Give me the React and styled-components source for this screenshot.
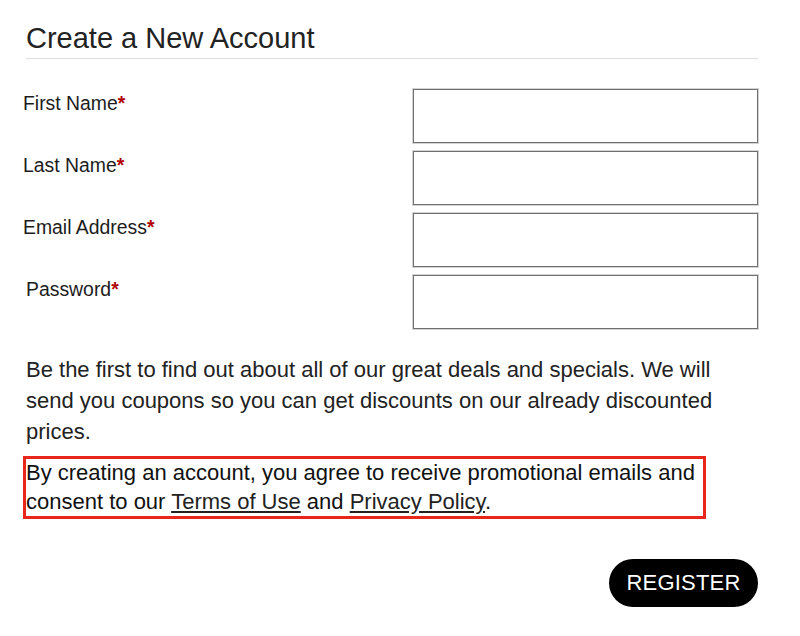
import styled, { createGlobalStyle } from "styled-components";

const GlobalStyle = createGlobalStyle`
  body {
    margin: 0;
    background: #fff;
    font-family: "Liberation Sans", Arial, sans-serif;
    color: #222;
  }
`;

const Page = styled.main`
  width: 732px;
  padding: 18px 0 0 26px;
`;

const Title = styled.h1`
  margin: 0;
  font-size: 29px;
  font-weight: 400;
  line-height: 40px;
  color: #222;
  border-bottom: 1px solid #dcdcdc;
`;

const Form = styled.form`
  display: flex;
  flex-direction: column;
  gap: 8px;
  margin-top: 30px;
`;

const Row = styled.div`
  display: grid;
  grid-template-columns: 390px 345px;
  align-items: start;
  margin-left: -3px;
`;

const Label = styled.label`
  font-size: 19.4px;
  line-height: 22px;
  padding-top: 3px;
  padding-left: ${(p) => p.$indent || 0}px;
  color: #1c1c1c;
`;

const Required = styled.span`
  color: #b00000;
  font-weight: 700;
`;

const Input = styled.input`
  box-sizing: border-box;
  width: 345px;
  height: 54px;
  border: 1px solid #6f6f6f;
  box-shadow: 0 0 0 1px #d4d4d4;
  background: #fff;
  font-size: 18px;
  padding: 0 10px;
  outline: none;
`;

const Text = styled.p`
  margin: 0;
  font-size: 22px;
  line-height: 31px;
  color: #222;
`;

const Intro = styled(Text)`
  margin-top: 25px;
  width: 710px;
`;

const Notice = styled(Text)`
  margin: 9px 0 0 -3px;
  padding: 0 2px 0 0;
  width: 675px;
  line-height: 28.5px;
  border: 3px solid #e8261a;
  color: #111;
`;

const Link = styled.a`
  color: #222;
  text-decoration: underline;
`;

const Actions = styled.div`
  display: flex;
  justify-content: flex-end;
  margin-top: 40px;
`;

const Button = styled.button`
  background: #000;
  color: #fff;
  border: none;
  border-radius: 24px;
  width: 149px;
  height: 48px;
  font-family: "Liberation Sans", Arial, sans-serif;
  font-size: 22px;
  letter-spacing: 0.2px;
  cursor: pointer;
`;

const fields = [
  { id: "first", label: "First Name" },
  { id: "last", label: "Last Name" },
  { id: "email", label: "Email Address", type: "email" },
  { id: "password", label: "Password", type: "password", indent: 3 },
];

export default function App() {
  return (
    <>
      <GlobalStyle />
      <Page>
        <Title>Create a New Account</Title>
        <Form onSubmit={(e) => e.preventDefault()}>
          {fields.map((f) => (
            <Row key={f.id}>
              <Label htmlFor={f.id} $indent={f.indent}>
                {f.label}
                <Required>*</Required>
              </Label>
              <Input id={f.id} type={f.type || "text"} />
            </Row>
          ))}
        </Form>
        <Intro>
          Be the first to find out about all of our great deals and specials. We will
          send you coupons so you can get discounts on our already discounted prices.
        </Intro>
        <Notice>
          By creating an account, you agree to receive promotional emails and consent
          to our <Link href="#">Terms of Use</Link> and <Link href="#">Privacy Policy</Link>.
        </Notice>
        <Actions>
          <Button type="submit">REGISTER</Button>
        </Actions>
      </Page>
    </>
  );
}
